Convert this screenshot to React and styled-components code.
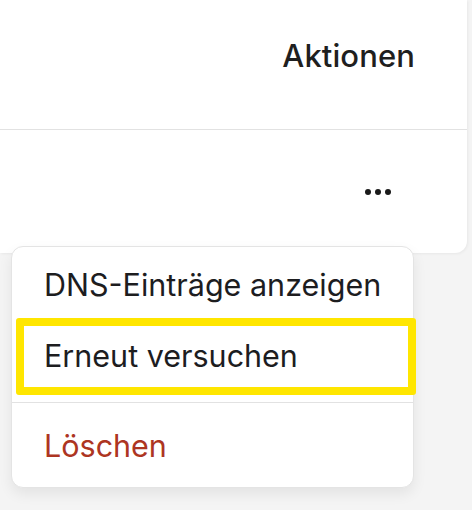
import React from 'react'
import styled, { createGlobalStyle } from 'styled-components'

const GlobalStyle = createGlobalStyle`
  html, body {
    margin: 0;
    padding: 0;
    background: #f4f4f4;
  }
  body {
    font-family: Inter, "Noto Sans", sans-serif;
    color: #1d1d1f;
    -webkit-font-smoothing: antialiased;
  }
`

const Page = styled.div`
  position: relative;
  width: 472px;
  height: 510px;
  overflow: hidden;
`

const Card = styled.div`
  width: 467px;
  height: 253px;
  background: #fff;
  border-bottom-right-radius: 12px;
  box-shadow: 1px 1px 3px rgba(0, 0, 0, 0.05);
  display: flex;
  flex-direction: column;
`

const HeaderRow = styled.div`
  height: 130px;
  display: flex;
  justify-content: flex-end;
  align-items: flex-start;
  padding: 38px 52px 0 0;
  box-sizing: border-box;
  border-bottom: 1px solid #e2e2e2;
`

const HeaderCell = styled.span`
  font-size: 31px;
  line-height: 36px;
  font-weight: 500;
  letter-spacing: 0.1px;
  color: #1f1f1f;
`

const BodyRow = styled.div`
  flex: 1;
  display: flex;
  justify-content: flex-end;
  align-items: center;
  padding-right: 75px;
`

const MoreButton = styled.button`
  border: 0;
  background: none;
  padding: 0;
  display: flex;
  cursor: pointer;
`

const Menu = styled.div`
  position: absolute;
  left: 11px;
  top: 246px;
  width: 403px;
  height: 242px;
  box-sizing: border-box;
  background: #fff;
  border: 1px solid #e4e4e4;
  border-radius: 12px;
  box-shadow: 0 6px 14px rgba(0, 0, 0, 0.07);
  padding: 3px 0 6px;
  display: flex;
  flex-direction: column;
`

const Item = styled.div`
  position: relative;
  height: 71px;
  display: flex;
  align-items: center;
  padding-left: 32px;
  font-size: 30.5px;
  line-height: 36px;
  color: ${({ $danger }) => ($danger ? '#ad3522' : '#1d1d1f')};
  cursor: pointer;
`

const Highlight = styled.span`
  position: absolute;
  left: 4px;
  right: -3px;
  top: -3px;
  bottom: -4px;
  border: 8px solid #ffe600;
  border-radius: 3px;
  pointer-events: none;
`

const Separator = styled.div`
  height: 1px;
  background: #e2e2e2;
  margin: 11px 0 7px;
`

const Dots = () => (
  <svg width="28" height="8" viewBox="0 0 28 8">
    <circle cx="4" cy="4" r="3" fill="#1a1a1a" />
    <circle cx="14" cy="4" r="3" fill="#1a1a1a" />
    <circle cx="24" cy="4" r="3" fill="#1a1a1a" />
  </svg>
)

const App = () => {
  return (
    <Page>
      <GlobalStyle />
      <Card>
        <HeaderRow>
          <HeaderCell>Aktionen</HeaderCell>
        </HeaderRow>
        <BodyRow>
          <MoreButton>
            <Dots />
          </MoreButton>
        </BodyRow>
      </Card>
      <Menu>
        <Item>DNS-Einträge anzeigen</Item>
        <Item>
          Erneut versuchen
          <Highlight />
        </Item>
        <Separator />
        <Item $danger>Löschen</Item>
      </Menu>
    </Page>
  )
}

export default App
